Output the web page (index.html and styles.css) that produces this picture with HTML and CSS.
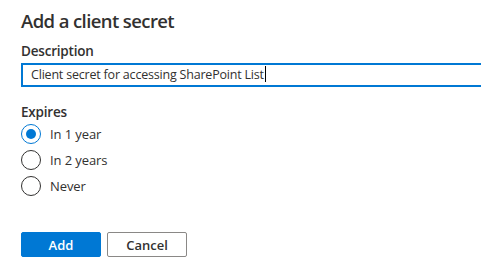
FILE: index.html
```html
<!DOCTYPE html>
<html>
<head>
<link rel="stylesheet" href="styles.css">
</head>
<body>
    <div class="panel">
        <h2 class="panel-title">Add a client secret</h2>

        <div class="field">
            <label class="field-label">Description</label>
            <div class="text-field">Client secret for accessing SharePoint List<span class="caret"></span></div>
        </div>

        <div class="field expires">
            <label class="field-label">Expires</label>
            <div class="choice-group">
                <div class="choice checked"><span class="radio"></span>In 1 year</div>
                <div class="choice"><span class="radio"></span>In 2 years</div>
                <div class="choice"><span class="radio"></span>Never</div>
            </div>
        </div>

        <div class="button-wrapper">
            <button class="button primary">Add</button>
            <button class="button">Cancel</button>
        </div>
    </div>
</body>
</html>
```
FILE: styles.css
```css
body {
    margin: 0;
    background: #ffffff;
    color: #323130;
    font-family: "Open Sans", "Noto Sans", sans-serif;
}

.panel {
    padding: 7px 0 0 21px;
}

.panel-title {
    margin: 0;
    font-size: 18.5px;
    font-weight: 600;
    line-height: 28px;
    letter-spacing: -0.6px;
}

.field {
    margin-top: 6px;
}

.field-label {
    display: block;
    font-size: 13.5px;
    font-weight: 600;
    line-height: 20px;
    padding-bottom: 2px;
    letter-spacing: -0.2px;
}

.text-field {
    box-sizing: border-box;
    height: 24px;
    border: 2px solid #0078d4;
    border-right: 0;
    padding: 0 8px;
    font-size: 12.5px;
    line-height: 20px;
    letter-spacing: -0.2px;
    white-space: nowrap;
    overflow: hidden;
}

.caret {
    display: inline-block;
    width: 1px;
    height: 16px;
    margin-left: 1px;
    background: #000000;
    vertical-align: -3px;
}

.expires {
    margin-top: 15px;
}

.choice-group {
    display: flex;
    flex-direction: column;
    gap: 6px;
}

.choice {
    display: flex;
    align-items: center;
    gap: 9px;
    font-size: 13px;
    line-height: 20px;
    letter-spacing: -0.1px;
}

.radio {
    box-sizing: border-box;
    width: 20px;
    height: 20px;
    border: 1px solid #323130;
    border-radius: 50%;
    display: flex;
    align-items: center;
    justify-content: center;
}

.choice.checked .radio {
    border-color: #0078d4;
}

.choice.checked .radio::after {
    content: "";
    width: 10px;
    height: 10px;
    border-radius: 50%;
    background: #0078d4;
}

.button-wrapper {
    display: flex;
    gap: 6px;
    margin-top: 36px;
}

.button {
    box-sizing: border-box;
    width: 80px;
    height: 25px;
    border: 1px solid #8a8886;
    border-radius: 2px;
    background: #ffffff;
    color: #323130;
    font-family: inherit;
    font-size: 13px;
    font-weight: 600;
    padding: 0;
}

.button.primary {
    background: #0078d4;
    border-color: #0078d4;
    color: #ffffff;
}
```
